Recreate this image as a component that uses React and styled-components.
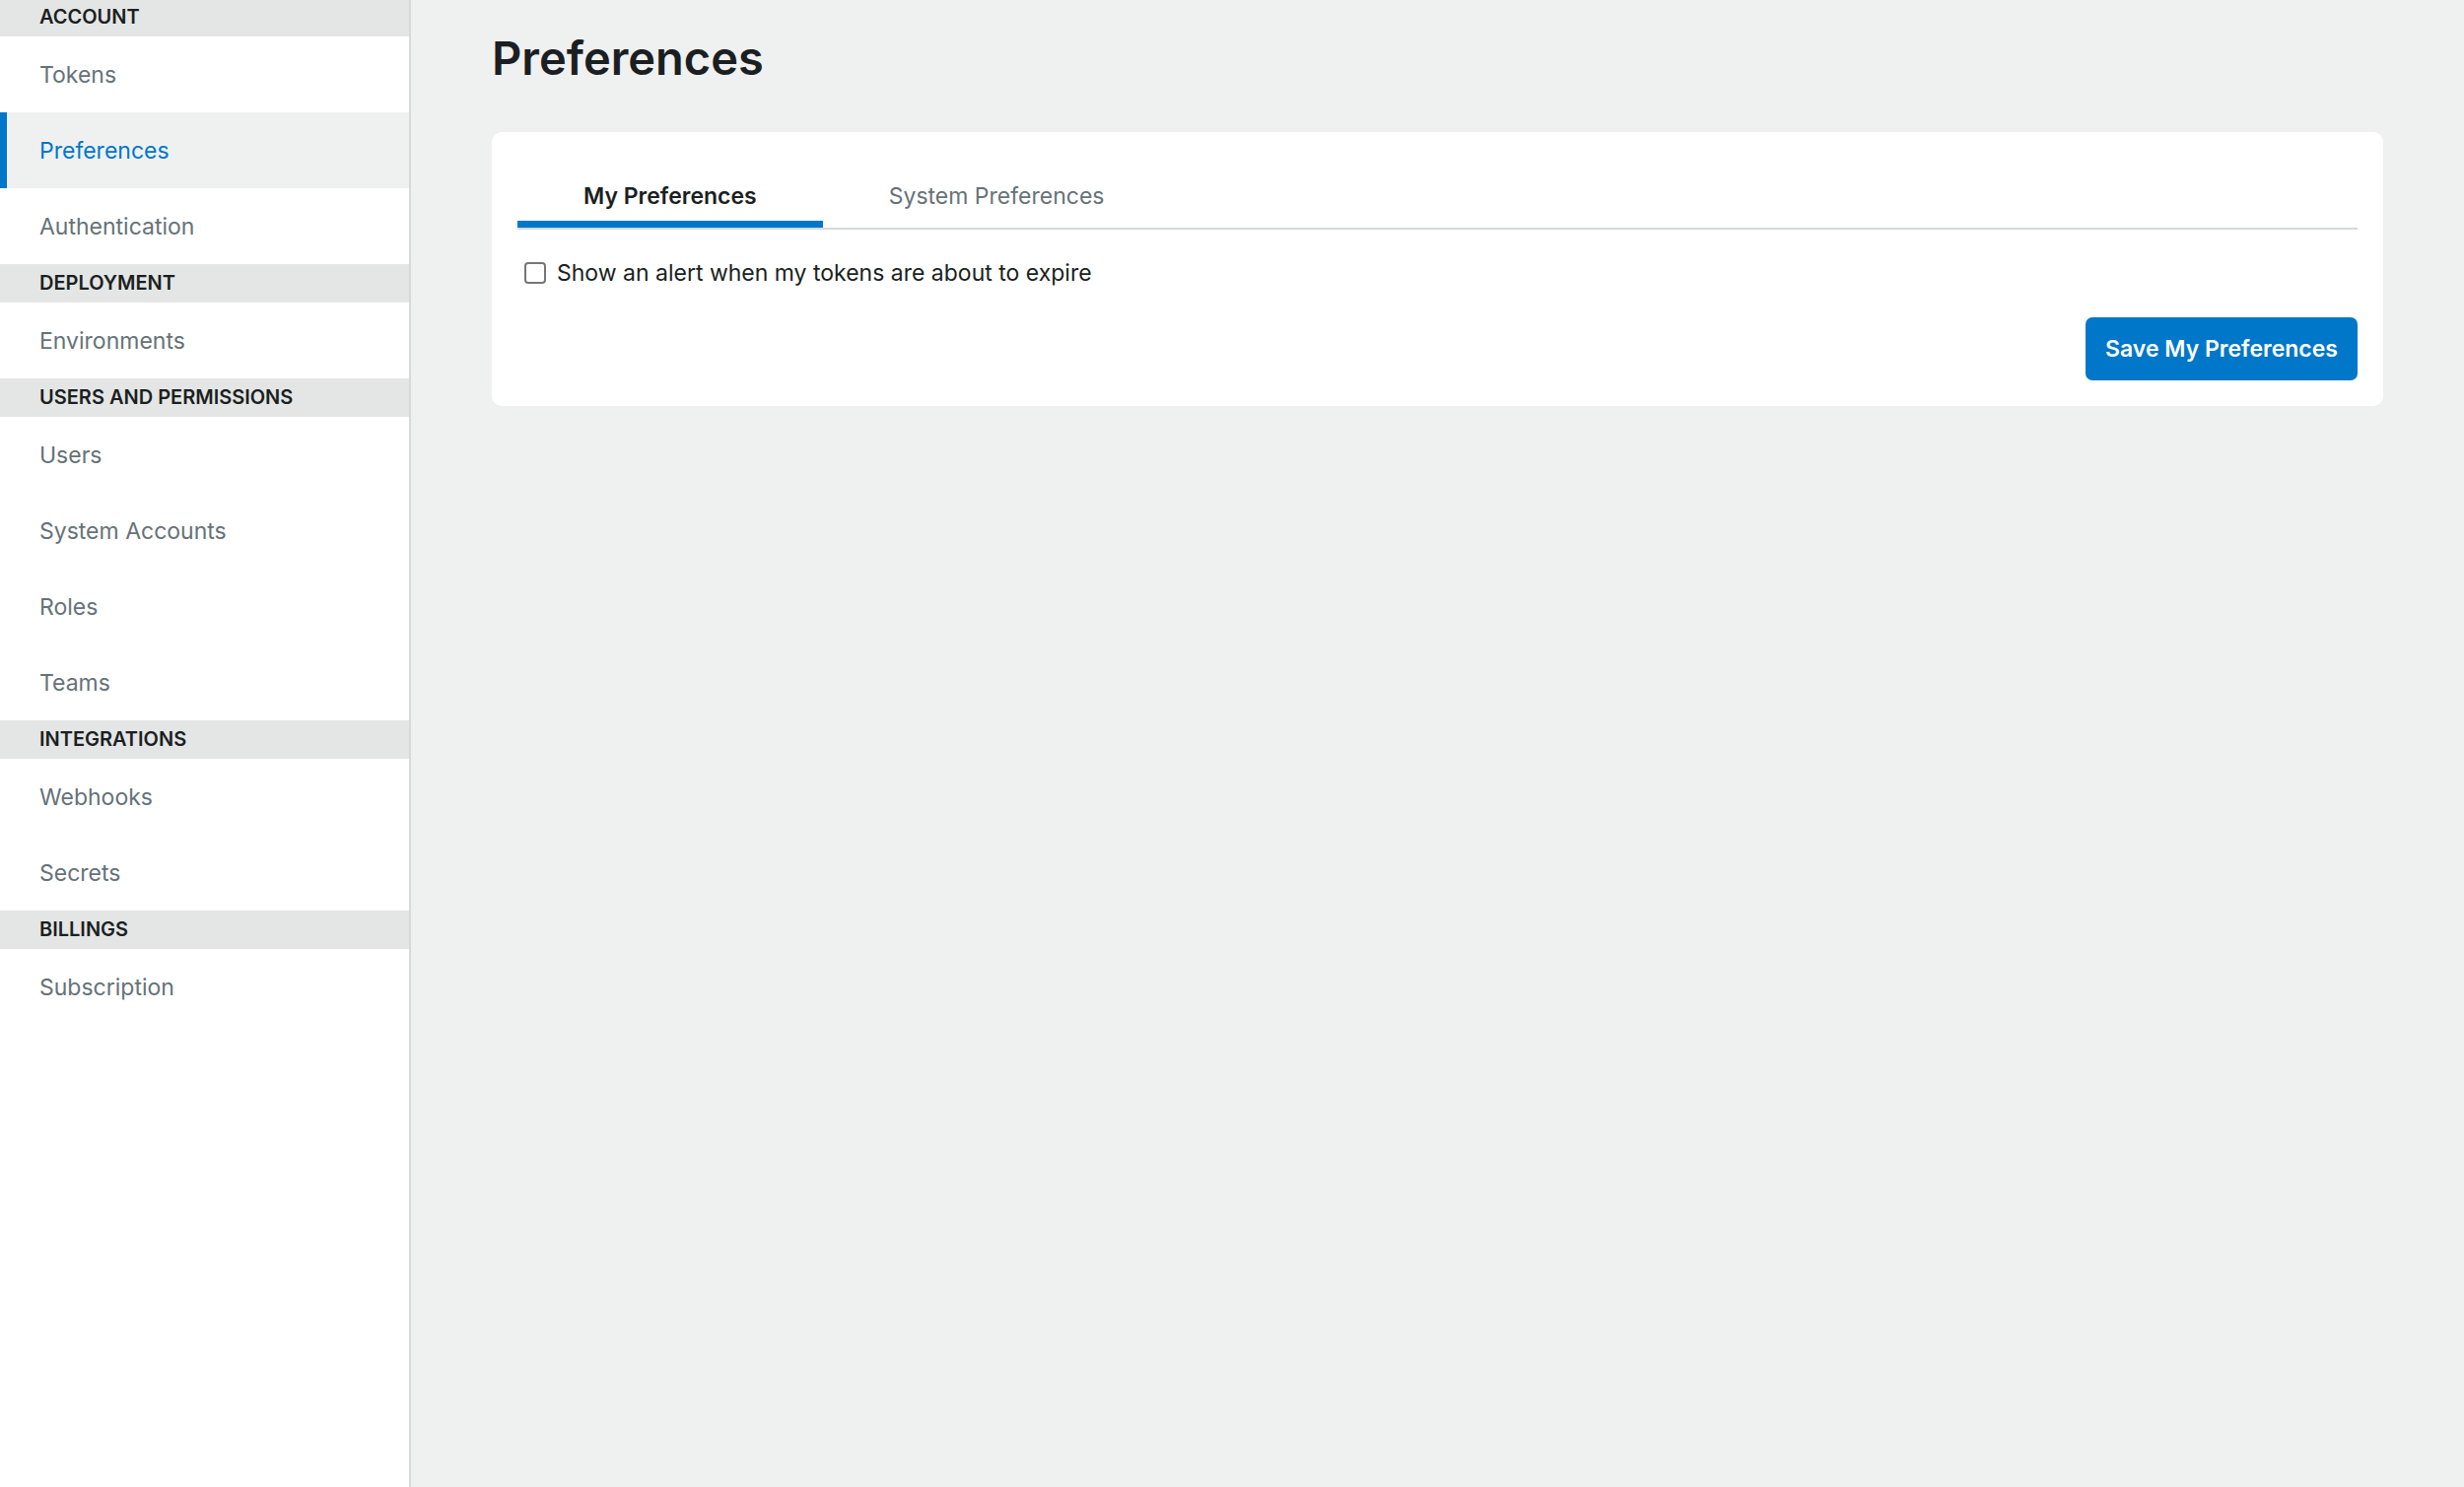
import {useState} from 'react'
import styled, {createGlobalStyle} from 'styled-components'

const GlobalStyle = createGlobalStyle`
	* {
		box-sizing: border-box;
	}
	body {
		margin: 0;
		background-color: #eff1f1;
		font-family: Inter, "Liberation Sans", sans-serif;
		font-size: 23px;
		line-height: 34px;
		color: #1b1f22;
	}
`

const Container = styled.div`
	display: flex;
	min-height: 100vh;
`
const Sidebar = styled.nav`
	flex: 0 0 417px;
	background-color: white;
	border-right: 2px solid #d6d9d9;
	overflow: hidden;
`
/* the list sits scrolled a little past its top edge */
const SidebarScroll = styled.div`
	margin-top: -2px;
`
const SectionTitle = styled.h2`
	margin: 0;
	padding: 0 40px;
	background-color: #e4e6e5;
	font-size: 20px;
	font-weight: 600;
	line-height: 39px;
	text-transform: uppercase;
`
const SectionList = styled.ul`
	margin: 0;
	padding: 0;
	list-style: none;
`
const SectionLink = styled.a`
	display: flex;
	align-items: center;
	height: 77px;
	padding: 0 40px 0 33px;
	border-left: 7px solid ${(props)=>props.$active ? "#0077c8" : "transparent"};
	background-color: ${(props)=>props.$active ? "#eff1f1" : "white"};
	color: ${(props)=>props.$active ? "#0077c8" : "#667277"};
	text-decoration: none;
`

const Main = styled.main`
	flex: 1;
	min-width: 0;
	padding: 24px 82px;
`
const Title = styled.h1`
	margin: 0 0 40px;
	font-size: 47px;
	font-weight: 600;
	line-height: 70px;
`
const Card = styled.section`
	padding: 26px;
	border-radius: 10px;
	background-color: white;
`
const Tabs = styled.div`
	display: flex;
	border-bottom: 2px solid #d6d9d9;
`
const Tab = styled.button`
	padding: 22px 67px 8px;
	border: none;
	border-bottom: 7px solid ${(props)=>props.$active ? "#0077c8" : "transparent"};
	background: none;
	color: ${(props)=>props.$active ? "#1b1f22" : "#667277"};
	font: inherit;
	font-weight: ${(props)=>props.$active ? 600 : 400};
	cursor: pointer;
`
const Option = styled.div`
	display: flex;
	align-items: center;
	gap: 11px;
	margin: 27px 0 28px;
	padding-left: 7px;
`
const Checkbox = styled.input`
	width: 22px;
	height: 22px;
	margin: 0;
	border: 2px solid #767676;
	border-radius: 4px;
	background-color: ${(props)=>props.checked ? "#0077c8" : "white"};
	appearance: none;
`
const Actions = styled.div`
	display: flex;
	justify-content: flex-end;
`
const SaveButton = styled.button`
	padding: 15px 20px;
	border: none;
	border-radius: 7px;
	background-color: #0077c8;
	color: white;
	font: inherit;
	font-weight: 600;
	cursor: pointer;
`

const sections = [
	{title: "Account", links: ["Tokens", "Preferences", "Authentication"]},
	{title: "Deployment", links: ["Environments"]},
	{title: "Users and Permissions", links: ["Users", "System Accounts", "Roles", "Teams"]},
	{title: "Integrations", links: ["Webhooks", "Secrets"]},
	{title: "Billings", links: ["Subscription"]},
]

const tabs = ["My Preferences", "System Preferences"]

const App = () => {
	const [tab, setTab] = useState(tabs[0])
	const [alertOn, setAlertOn] = useState(false)

	return (
		<Container>
			<GlobalStyle />
			<Sidebar>
				<SidebarScroll>
					{sections.map((section)=>(
					<div key={section.title}>
						<SectionTitle>{section.title}</SectionTitle>
						<SectionList>
							{section.links.map((link)=>(
							<li key={link}>
								<SectionLink href="#" $active={link === "Preferences"}>{link}</SectionLink>
							</li>
							))}
						</SectionList>
					</div>
					))}
				</SidebarScroll>
			</Sidebar>
			<Main>
				<Title>Preferences</Title>
				<Card>
					<Tabs role="tablist">
						{tabs.map((name)=>(
						<Tab key={name} role="tab" aria-selected={tab === name} $active={tab === name} onClick={()=>setTab(name)}>{name}</Tab>
						))}
					</Tabs>
					<Option>
						<Checkbox type="checkbox" id="token-alert" checked={alertOn} onChange={()=>setAlertOn(!alertOn)} />
						<label htmlFor="token-alert">Show an alert when my tokens are about to expire</label>
					</Option>
					<Actions>
						<SaveButton>Save My Preferences</SaveButton>
					</Actions>
				</Card>
			</Main>
		</Container>
	)
}
export default App
